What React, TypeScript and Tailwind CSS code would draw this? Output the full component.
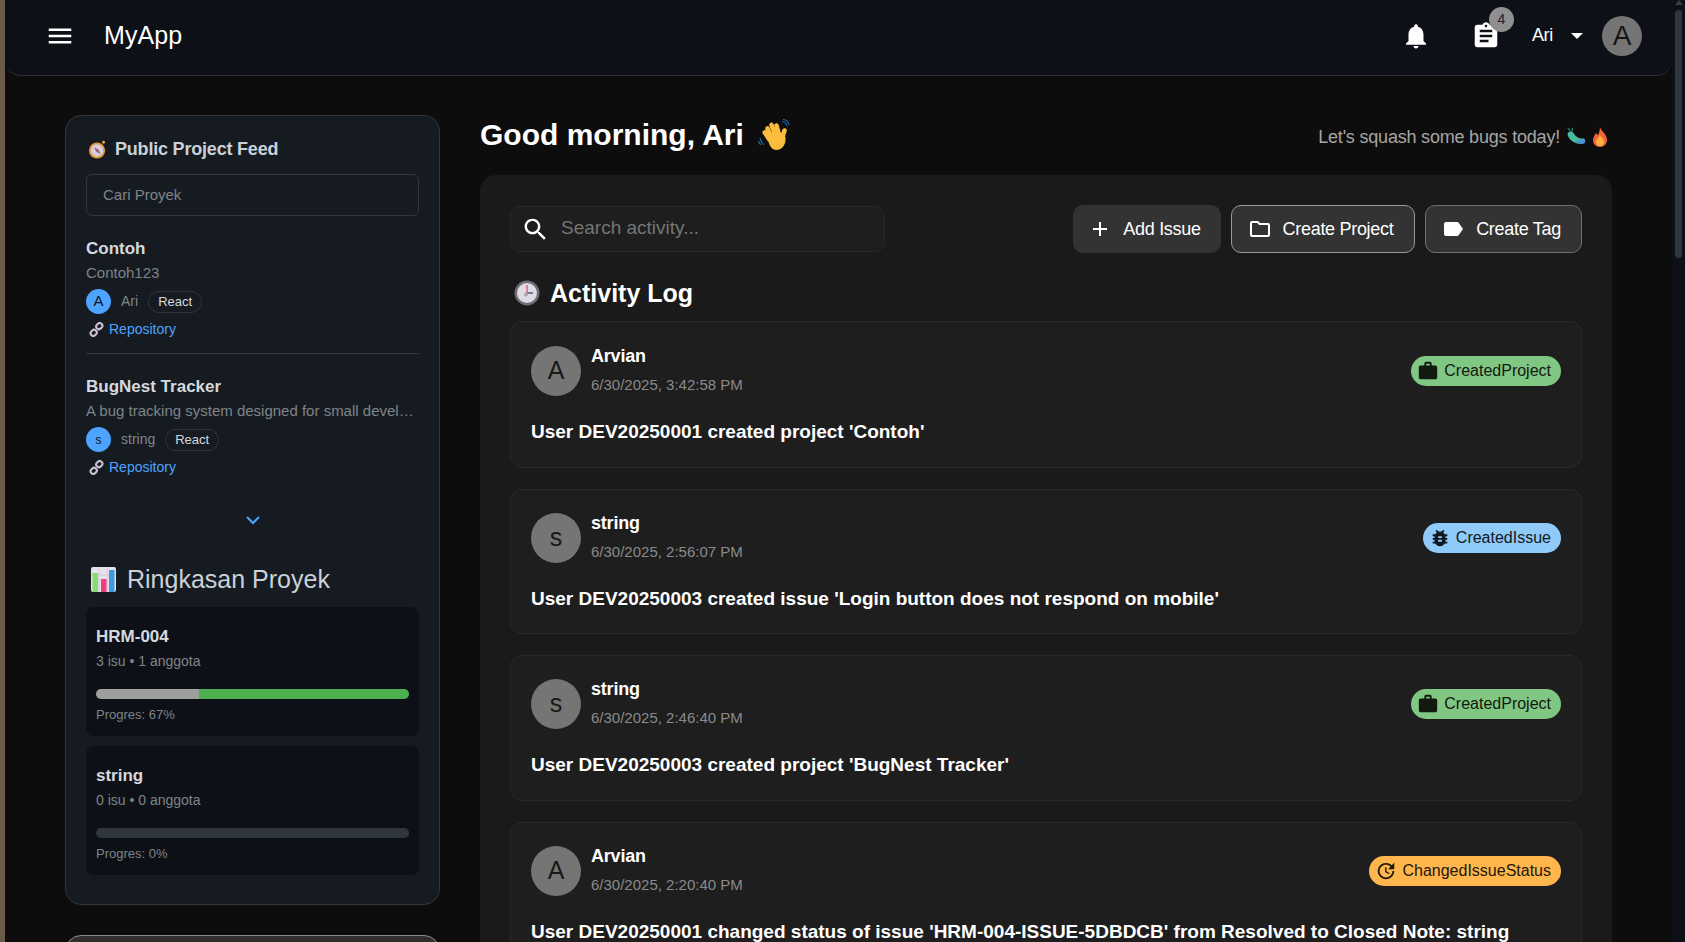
import type { ReactNode } from "react";

const font = { fontFamily: '"Liberation Sans", Arial, sans-serif' };

function MuiIcon({ d, className }: { d: string; className?: string }) {
  return (
    <svg viewBox="0 0 24 24" fill="currentColor" className={className}>
      <path d={d} />
    </svg>
  );
}

const icons = {
  menu: "M3 18h18v-2H3v2zm0-5h18v-2H3v2zm0-7v2h18V6H3z",
  bell: "M12 22c1.1 0 2-.9 2-2h-4c0 1.1.9 2 2 2zm6-6v-5c0-3.07-1.64-5.64-4.5-6.32V4c0-.83-.67-1.5-1.5-1.5s-1.5.67-1.5 1.5v.68C7.63 5.36 6 7.92 6 11v5l-2 2v1h16v-1l-2-2z",
  assignment:
    "M19 3h-4.18C14.4 1.84 13.3 1 12 1c-1.3 0-2.4.84-2.82 2H5c-1.1 0-2 .9-2 2v14c0 1.1.9 2 2 2h14c1.1 0 2-.9 2-2V5c0-1.1-.9-2-2-2zm-7 0c.55 0 1 .45 1 1s-.45 1-1 1-1-.45-1-1 .45-1 1-1zm2 14H7v-2h7v2zm3-4H7v-2h10v2zm0-4H7V7h10v2z",
  search:
    "M15.5 14h-.79l-.28-.27C15.41 12.59 16 11.11 16 9.5 16 5.91 13.09 3 9.5 3S3 5.91 3 9.5 5.91 16 9.5 16c1.61 0 3.09-.59 4.23-1.57l.27.28v.79l5 4.99L20.49 19l-4.99-5zm-6 0C7.01 14 5 11.99 5 9.5S7.01 5 9.5 5 14 7.01 14 9.5 11.99 14 9.5 14z",
  plus: "M19 13h-6v6h-2v-6H5v-2h6V5h2v6h6v2z",
  folder:
    "M9.17 6l2 2H20v10H4V6h5.17M10 4H4c-1.1 0-1.99.9-1.99 2L2 18c0 1.1.9 2 2 2h16c1.1 0 2-.9 2-2V8c0-1.1-.9-2-2-2h-8l-2-2z",
  label:
    "M17.63 5.84C17.27 5.33 16.67 5 16 5L5 5.01C3.9 5.01 3 5.9 3 7v10c0 1.1.9 1.99 2 1.99L16 19c.67 0 1.27-.33 1.63-.84L22 12l-4.37-6.16z",
  work: "M20 6h-4V4c0-1.11-.89-2-2-2h-4c-1.11 0-2 .89-2 2v2H4c-1.11 0-1.99.89-1.99 2L2 19c0 1.11.89 2 2 2h16c1.11 0 2-.89 2-2V8c0-1.11-.89-2-2-2zm-6 0h-4V4h4v2z",
  bug: "M20 8h-2.81c-.45-.78-1.07-1.45-1.82-1.96L17 4.41 15.59 3l-2.17 2.17C12.96 5.06 12.49 5 12 5c-.49 0-.96.06-1.41.17L8.41 3 7 4.41l1.62 1.63C7.88 6.55 7.26 7.22 6.81 8H4v2h2.09c-.05.33-.09.66-.09 1v1H4v2h2v1c0 .34.04.67.09 1H4v2h2.81c1.04 1.79 2.97 3 5.19 3s4.15-1.21 5.19-3H20v-2h-2.09c.05-.33.09-.66.09-1v-1h2v-2h-2v-1c0-.34-.04-.67-.09-1H20V8zm-6 8h-4v-2h4v2zm0-4h-4v-2h4v2z",
  update:
    "M21 10.12h-6.78l2.74-2.82c-2.73-2.7-7.15-2.8-9.88-.1-2.73 2.71-2.73 7.08 0 9.79s7.15 2.71 9.88 0C18.32 15.65 19 14.08 19 12.1h2c0 1.98-.88 4.55-2.64 6.29-3.51 3.48-9.21 3.48-12.72 0-3.5-3.47-3.53-9.11-.02-12.58s9.14-3.47 12.65 0L21 3v7.12zM12.5 8v4.25l3.5 2.08-.72 1.21L11 13V8h1.5z",
};

// the colour emoji of the picture, drawn
function Compass() {
  return (
    <svg viewBox="0 0 20 20" className="h-[19px] w-[19px] shrink-0">
      <rect x="15" y="0.5" width="3" height="3" rx="1" fill="#e5a33d" transform="rotate(40 16 2)" />
      <circle cx="9.5" cy="11" r="8.5" fill="#e39a3b" />
      <circle cx="9.5" cy="11" r="6.5" fill="#d9cfe0" />
      <path d="M6.5 7.5 11 10l2 4.5L8.5 12z" fill="#c8516e" />
      <path d="M8.5 12 11 10l2 4.5z" fill="#7d7f8c" />
    </svg>
  );
}

function LinkEmoji() {
  return (
    <svg viewBox="0 0 16 16" className="h-[15px] w-[15px] shrink-0" fill="none" stroke="#cdbfd4" strokeWidth="2.2">
      <rect x="7.6" y="1.6" width="6.8" height="5.6" rx="2.6" transform="rotate(-45 11 4.4)" />
      <rect x="1.6" y="8.8" width="6.8" height="5.6" rx="2.6" transform="rotate(-45 5 11.6)" />
    </svg>
  );
}

function ChartEmoji() {
  return (
    <svg viewBox="0 0 25 25" className="h-[25px] w-[25px] shrink-0">
      <rect width="25" height="25" rx="2" fill="#e6e1ec" />
      <path d="M8 0v25M16.5 0v25M0 8h25" stroke="#cfc8d8" strokeWidth="0.8" />
      <rect x="1.5" y="6" width="5.5" height="19" fill="#86dc6c" />
      <rect x="10" y="12" width="5.5" height="13" fill="#ee3f7c" />
      <rect x="18" y="3" width="5.5" height="22" fill="#3a9ae4" />
    </svg>
  );
}

function WaveEmoji() {
  return (
    <svg viewBox="0 0 32 32" className="h-[32px] w-[32px] shrink-0">
      <path d="M2 19c.6 3 1.800 5 3.800 6.800M0.500 22c.5 1.500 1.200 2.800 2.300 3.800M24 2.500c2.500.2 4.500 2 5 4.500M25 0.500c3 .3 5.500 2.500 6 5.500" stroke="#1c6aa8" strokeWidth="1.200" fill="none" />
      <g stroke="#fbbd3c" strokeWidth="4.600" strokeLinecap="round">
        <path d="M11 20 6.800 13.500" />
        <path d="M13 18 9.500 9.500" />
        <path d="M17 15 13.500 6" />
        <path d="M20.500 14 18.500 6.500" />
        <path d="M24 19 26.500 11.500" />
      </g>
      <path d="M8.500 16c1-1.500 8-5 15.500-2 3 1.500 4 4 3.500 7.500C27 27 23 31 18.500 31c-4.500 0-7-3-10-15z" fill="#fbbd3c" />
    </svg>
  );
}

function ClockEmoji() {
  return (
    <svg viewBox="0 0 26 26" className="h-[26px] w-[26px] shrink-0">
      <circle cx="13" cy="13" r="12.500" fill="#6f6d74" />
      <circle cx="13" cy="13" r="10" fill="#dedbe3" />
      <path d="M12.400 13V5h1.200v8z" fill="#e5416f" />
      <path d="M13 12.300h6v1.400h-6z" fill="#4b4a78" />
      <circle cx="12" cy="14.500" r="2" fill="#a9a6b0" />
    </svg>
  );
}

function BugEmoji() {
  return (
    <svg viewBox="0 0 20 20" className="h-[20px] w-[20px] shrink-0">
      <path d="M2 1 4.500 4.500M6.500 1 6 4.500" stroke="#2f8c6a" strokeWidth="1.200" />
      <path d="M1.500 7.500c0-3.500 4.500-4 6-1.500 2 3.500 4.500 5.500 10 5.500 2 0 2 4.500-.5 5C11 18 3 14 1.500 7.500z" fill="#49b9a0" />
      <path d="M9 14.500c3 2 6 2.500 9 2 1.200-.5 1.500-2.500 1-4-3 .5-7 .5-10 2z" fill="#4f8fd8" />
    </svg>
  );
}

function FireEmoji() {
  return (
    <svg viewBox="0 0 16 20" className="h-[20px] w-[16px] shrink-0">
      <path d="M8 0c1 4 7 7 7 13 0 4-3 7-7 7s-7-3-7-7c0-3 2-5 3-7 1 1 1 2 2 2 1-2 2-5 2-8z" fill="#f0653a" />
      <path d="M8 8c1 2 4 4 4 7 0 2.500-2 4-4 4s-4-1.500-4-4c0-2.500 3-4 4-7z" fill="#fbb040" />
    </svg>
  );
}

function Header() {
  return (
    <header className="flex h-[76px] shrink-0 items-center justify-between rounded-b-2xl border-b border-[#2b2e33] bg-[#0d1117] pb-[4px] pl-[40px] pr-[30px] text-white">
      <div className="flex items-center gap-[29px]">
        <MuiIcon d={icons.menu} className="h-[30px] w-[30px]" />
        <span className="text-[25px] leading-none tracking-[0.1px]">MyApp</span>
      </div>
      <div className="flex items-center">
        <MuiIcon d={icons.bell} className="h-[30px] w-[30px]" />
        <div className="relative ml-[40px]">
          <MuiIcon d={icons.assignment} className="h-[30px] w-[30px]" />
          <span className="absolute -right-[13px] -top-[14px] flex h-[25px] w-[25px] items-center justify-center rounded-full bg-[#8f8f8f] text-[14px] text-[#16233c]">
            4
          </span>
        </div>
        <span className="ml-[31px] text-[18px] tracking-[-0.3px]">Ari</span>
        <span className="ml-[18px] h-0 w-0 border-x-[6.500px] border-t-[6.500px] border-x-transparent border-t-white" />
        <span className="ml-[19px] flex h-[40px] w-[40px] items-center justify-center rounded-full bg-[#757575] text-[28px] text-[#161616]">
          A
        </span>
      </div>
    </header>
  );
}

function FeedItem({
  title,
  desc,
  user,
  initial,
  small,
}: {
  title: string;
  desc: string;
  user: string;
  initial: string;
  small?: boolean;
}) {
  return (
    <div>
      <div className="text-[17px] font-bold leading-[20px] text-[#d5d9de]">{title}</div>
      <div className="mt-[4px] whitespace-nowrap text-[15px] leading-[20px] text-[#7f8489]">{desc}</div>
      <div className="mt-[6px] flex h-[25px] items-center">
        <span
          className={`flex h-[25px] w-[25px] items-center justify-center rounded-full bg-[#4da3ff] text-[#0d1117] ${small ? "text-[12px]" : "text-[15px]"}`}
        >
          {initial}
        </span>
        <span className="ml-[10px] text-[14px] text-[#7f8489]">{user}</span>
        <span className="ml-[10px] flex h-[22px] items-center rounded-full border border-[#2f343a] px-[9px] text-[13px] text-[#d5d9de]">
          React
        </span>
      </div>
      <div className="mt-[5px] flex h-[20px] items-center pl-[3px]">
        <LinkEmoji />
        <span className="ml-[5px] text-[14px] text-[#4da3ff]">Repository</span>
      </div>
    </div>
  );
}

function SummaryCard({ name, meta, pct }: { name: string; meta: string; pct: number }) {
  return (
    <div className="h-[129px] rounded-lg bg-[#0d1117] px-[10px] pt-[20px]">
      <div className="text-[17px] font-bold leading-[20px] text-[#d5d9de]">{name}</div>
      <div className="mt-[4px] text-[14px] leading-[20px] text-[#7f8489]">{meta}</div>
      <div className="mt-[18px] flex h-[10px] overflow-hidden rounded-full bg-[#2f363d]">
        {pct > 0 && (
          <>
            <div className="h-full bg-[#9e9e9e]" style={{ width: `${100 - pct}%` }} />
            <div className="h-full flex-1 bg-[#4caf50]" />
          </>
        )}
      </div>
      <div className="mt-[6px] text-[13px] leading-[20px] text-[#7f8489]">Progres: {pct}%</div>
    </div>
  );
}

function Sidebar() {
  return (
    <aside className="w-[375px] shrink-0">
      <div className="h-[790px] rounded-2xl border border-[#30363d] bg-[#161b22] px-[20px] pt-[21px]">
        <div className="flex h-[25px] items-center gap-[8px] pl-[2px]">
          <Compass />
          <span className="text-[18px] font-bold tracking-[-0.2px] text-[#c9d1d9]">Public Project Feed</span>
        </div>
        <div className="mt-[12px] flex h-[42px] items-center rounded-md border border-[#30363d] px-[16px] text-[15px] text-[#7f8489]">
          Cari Proyek
        </div>
        <div className="mt-[23px]">
          <FeedItem title="Contoh" desc="Contoh123" user="Ari" initial="A" />
        </div>
        <div className="mt-[14px] border-t border-[#30363d]" />
        <div className="mt-[23px]">
          <FeedItem
            title="BugNest Tracker"
            desc="A bug tracking system designed for small devel…"
            user="string"
            initial="s"
            small
          />
        </div>
        <div className="mt-[39px] flex justify-center">
          <svg viewBox="0 0 14 9" className="h-[9px] w-[14px]" fill="none" stroke="#4da3ff" strokeWidth="2">
            <path d="m1 1 6 6 6-6" />
          </svg>
        </div>
        <div className="mt-[38px] flex h-[32px] items-center gap-[11px] pl-[5px]">
          <ChartEmoji />
          <span className="text-[25px] leading-none text-[#c9d1d9]">Ringkasan Proyek</span>
        </div>
        <div className="mt-[12px] flex flex-col gap-[10px]">
          <SummaryCard name="HRM-004" meta="3 isu • 1 anggota" pct={67} />
          <SummaryCard name="string" meta="0 isu • 0 anggota" pct={0} />
        </div>
      </div>
      <div className="mt-[30px] h-[60px] rounded-t-2xl border border-[#8a8a8a] bg-[#2f2f2f]" />
    </aside>
  );
}

function ActionButton({ icon, label, outlined, className }: { icon: string; label: string; outlined?: string; className: string }) {
  return (
    <button
      className={`flex h-[48px] items-center justify-center gap-[11px] rounded-[10px] bg-[#333333] pr-[5px] text-[18px] tracking-[-0.3px] text-white ${outlined ?? ""} ${className}`}
    >
      <MuiIcon d={icon} className="h-[24px] w-[24px]" />
      {label}
    </button>
  );
}

function Chip({ icon, label, className }: { icon: string; label: string; className: string }) {
  return (
    <span className={`flex h-[30px] items-center gap-[5px] rounded-full pl-[6px] pr-[10px] text-[16px] ${className}`}>
      <MuiIcon d={icon} className="h-[22px] w-[22px]" />
      {label}
    </span>
  );
}

function ActivityCard({
  name,
  initial,
  date,
  text,
  chip,
  className,
}: {
  name: string;
  initial: string;
  date: string;
  text: string;
  chip: ReactNode;
  className: string;
}) {
  return (
    <div className={`shrink-0 rounded-xl border border-[#292929] bg-[#1e1e1e] px-[20px] ${className}`}>
      <div className="flex items-center">
        <span className="flex h-[50px] w-[50px] items-center justify-center rounded-full bg-[#757575] text-[25px] text-[#181818]">
          {initial}
        </span>
        <div className="ml-[10px] flex-1 -translate-y-[1px]">
          <div className="text-[18px] font-bold leading-[24px] tracking-[-0.2px] text-white">{name}</div>
          <div className="mt-[7px] text-[15px] leading-[20px] text-[#8a8a8a]">{date}</div>
        </div>
        {chip}
      </div>
      <div className="mt-[23px] whitespace-nowrap text-[19px] font-bold leading-[26px] text-white">{text}</div>
    </div>
  );
}

function Main() {
  return (
    <main className="flex min-w-0 flex-1 flex-col">
      <div className="flex h-[40px] items-center justify-between">
        <div className="flex items-center gap-[14px]">
          <h1 className="text-[30px] font-bold leading-none text-white">Good morning, Ari</h1>
          <WaveEmoji />
        </div>
        <div className="mr-[4px] flex items-center gap-[6px] pt-[4px] text-[18px] text-[#a6a6a6]">
          <span className="tracking-[-0.2px]">Let's squash some bugs today!</span>
          <BugEmoji />
          <FireEmoji />
        </div>
      </div>
      <section className="mt-[20px] h-[800px] rounded-t-2xl bg-[#1a1a1a] px-[30px] pt-[30px]">
        <div className="flex h-[48px] items-center justify-between">
          <div className="flex h-[46px] w-[375px] items-center rounded-[10px] border border-[#282828] bg-[#1e1e1e] pl-[10px] text-white">
            <MuiIcon d={icons.search} className="h-[29px] w-[29px]" />
            <span className="ml-[11px] -translate-y-[1px] text-[19px] text-[#757575]">Search activity...</span>
          </div>
          <div className="flex gap-[10px]">
            <ActionButton icon={icons.plus} label="Add Issue" className="w-[148px]" />
            <ActionButton icon={icons.folder} label="Create Project" outlined="border border-[#9a9a9a]" className="w-[184px]" />
            <ActionButton icon={icons.label} label="Create Tag" outlined="border border-[#6f6f6f]" className="w-[157px]" />
          </div>
        </div>
        <div className="mt-[23px] flex h-[34px] items-center gap-[10px] pl-[4px]">
          <ClockEmoji />
          <h2 className="text-[25px] font-bold leading-none text-white">Activity Log</h2>
        </div>
        <div className="mt-[11px] flex flex-col gap-[21px]">
          <ActivityCard
            name="Arvian"
            initial="A"
            date="6/30/2025, 3:42:58 PM"
            text="User DEV20250001 created project 'Contoh'"
            className="h-[147px] pt-[23px]"
            chip={<Chip icon={icons.work} label="CreatedProject" className="bg-[#81c784] text-[#12190f]" />}
          />
          <ActivityCard
            name="string"
            initial="s"
            date="6/30/2025, 2:56:07 PM"
            text="User DEV20250003 created issue 'Login button does not respond on mobile'"
            className="h-[145px] pt-[22px]"
            chip={<Chip icon={icons.bug} label="CreatedIssue" className="bg-[#90caf9] text-[#101822]" />}
          />
          <ActivityCard
            name="string"
            initial="s"
            date="6/30/2025, 2:46:40 PM"
            text="User DEV20250003 created project 'BugNest Tracker'"
            className="h-[146px] pt-[22px]"
            chip={<Chip icon={icons.work} label="CreatedProject" className="bg-[#81c784] text-[#12190f]" />}
          />
          <ActivityCard
            name="Arvian"
            initial="A"
            date="6/30/2025, 2:20:40 PM"
            text="User DEV20250001 changed status of issue 'HRM-004-ISSUE-5DBDCB' from Resolved to Closed Note: string"
            className="h-[146px] pt-[22px]"
            chip={<Chip icon={icons.update} label="ChangedIssueStatus" className="bg-[#ffb74d] text-[#1e1608]" />}
          />
        </div>
      </section>
    </main>
  );
}

export default function App() {
  return (
    <div className="flex h-[942px] overflow-hidden bg-[#0d0d0d]" style={font}>
      <div className="w-[5px] shrink-0 bg-[#6b5b4b]" />
      <div className="flex min-w-0 flex-1 flex-col">
        <Header />
        <div className="flex gap-[40px] pl-[60px] pr-[60px] pt-[39px]">
          <Sidebar />
          <Main />
        </div>
      </div>
      {/* fake page scrollbar, the shot has no real one */}
      <div className="flex w-[13px] shrink-0 flex-col items-center bg-[#0d1117]">
        <div className="mt-0 h-0 w-0 border-x-[4px] border-b-[5px] border-x-transparent border-b-[#3a3f45]" />
        <div className="mt-[5px] h-[248px] w-[7px] rounded-full bg-[#30363d]" />
      </div>
    </div>
  );
}
